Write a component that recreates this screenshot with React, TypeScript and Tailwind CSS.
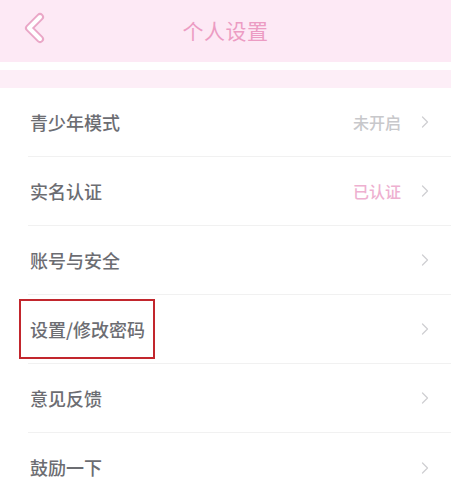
import { ChevronRight } from "lucide-react";

type Row = {
  label: string;
  value?: string;
  valueTone?: "muted" | "pink";
  boxed?: boolean;
};

const rows: Row[] = [
  { label: "青少年模式", value: "未开启", valueTone: "muted" },
  { label: "实名认证", value: "已认证", valueTone: "pink" },
  { label: "账号与安全" },
  { label: "设置/修改密码", boxed: true },
  { label: "意见反馈" },
  { label: "鼓励一下" },
];

function BackIcon() {
  return (
    <svg width="26" height="32" viewBox="0 0 26 32" fill="none">
      <path d="M18 5 L7 16 L18 27" stroke="#eaa7c7" strokeWidth="8" strokeLinecap="round" strokeLinejoin="round" />
      <path d="M18 5 L7 16 L18 27" stroke="#ffffff" strokeWidth="4" strokeLinecap="round" strokeLinejoin="round" />
    </svg>
  );
}

export default function App() {
  return (
    <div
      className="w-[451px] h-[500px] bg-white overflow-hidden"
      style={{ fontFamily: '"Noto Sans CJK SC", "Noto Sans", sans-serif' }}
    >
      {/* Header */}
      <div className="relative h-[62px] bg-[#fde9f5] flex items-center justify-center">
        <div className="absolute left-[22px] top-[12px]">
          <BackIcon />
        </div>
        <span className="text-[21px] text-[#ec9cc3] tracking-[0.5px]">个人设置</span>
      </div>

      <div className="h-[8px] bg-white" />
      <div className="h-[18px] bg-[#fdeef7]" />

      {/* List */}
      <div className="flex flex-col">
        {rows.map((row, i) => (
          <div
            key={row.label}
            className={`h-[69px] ml-[28px] flex items-center pr-[16px] ${
              i < rows.length - 1 ? "border-b border-[#f1f1f1]" : ""
            }`}
          >
            <div
              className={`relative flex items-center h-[60px] ${
                row.boxed ? "border-2 border-[#c2262d] -ml-[9px] pl-[9px] pr-[8px]" : "pl-[2px]"
              }`}
            >
              <span className="text-[18px] font-medium text-[#6c6d72]">{row.label}</span>
            </div>
            <div className="flex-1" />
            {row.value && (
              <span
                className={`text-[16px] font-medium mr-[14px] ${
                  row.valueTone === "pink" ? "text-[#eeb0d0]" : "text-[#c8c8cb]"
                }`}
              >
                {row.value}
              </span>
            )}
            <ChevronRight className="w-[20px] h-[20px] text-[#cfcfd2]" strokeWidth={1.5} />
          </div>
        ))}
      </div>
    </div>
  );
}
